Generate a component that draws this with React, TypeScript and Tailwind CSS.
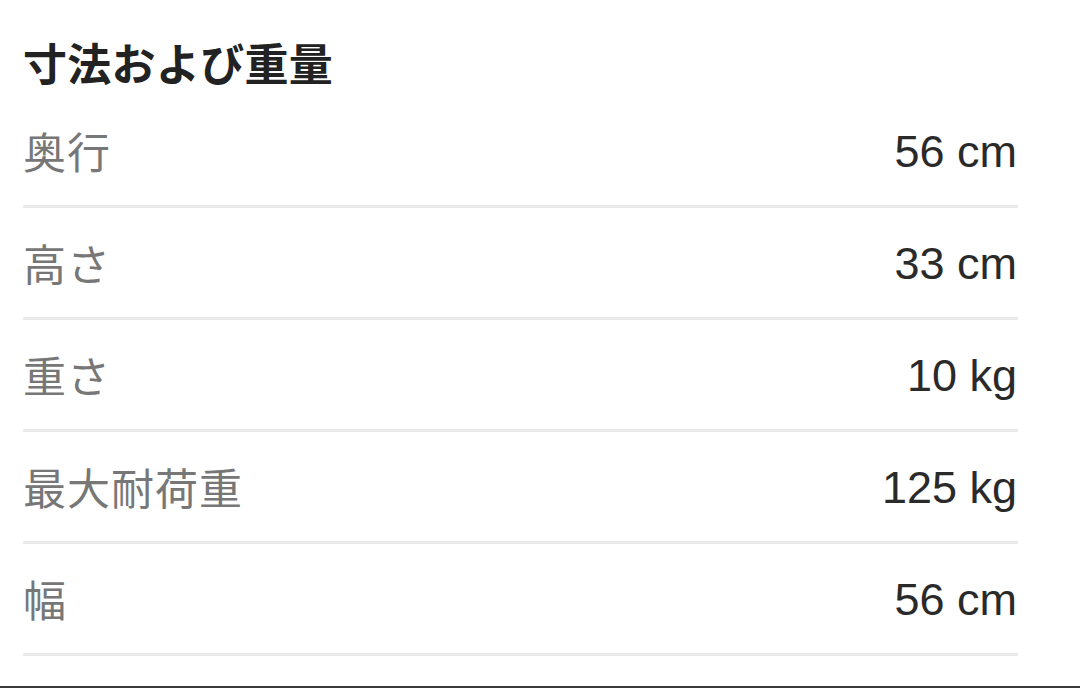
import React from "react";

const rows: [string, string][] = [
  ["奥行", "56 cm"],
  ["高さ", "33 cm"],
  ["重さ", "10 kg"],
  ["最大耐荷重", "125 kg"],
  ["幅", "56 cm"],
];

export default function App() {
  return (
    <div className="w-[1080px] h-[688px] bg-white overflow-hidden flex flex-col">
      <div className="pl-[23px] w-[1018px] flex flex-col">
        <div
          className="h-[96px] pt-[37px] text-[44px] leading-[50px] font-bold text-[#222] tracking-[0.3px]"
          style={{ fontFamily: '"Noto Sans CJK JP", "Noto Sans", sans-serif' }}
        >
          寸法および重量
        </div>
        {rows.map(([k, v]) => (
          <div key={k} className="h-[112px] flex flex-col">
            <div className="h-[109px] flex items-center justify-between pb-[2px]">
              <span
                className="text-[43px] leading-[50px] text-[#777] tracking-[1px]"
                style={{ fontFamily: '"Noto Sans CJK JP", sans-serif' }}
              >
                {k}
              </span>
              <span
                className="text-[45px] leading-[50px] text-[#2a2a2a] pr-[1px] pt-[5px]"
                style={{ fontFamily: '"Liberation Sans", Arial, sans-serif' }}
              >
                {v}
              </span>
            </div>
            <div className="h-[3px] bg-[#e9e9e9]" />
          </div>
        ))}
      </div>
      <div className="h-[31px]" />
      <div className="h-[2px] bg-[#3a3a3a]" />
    </div>
  );
}
